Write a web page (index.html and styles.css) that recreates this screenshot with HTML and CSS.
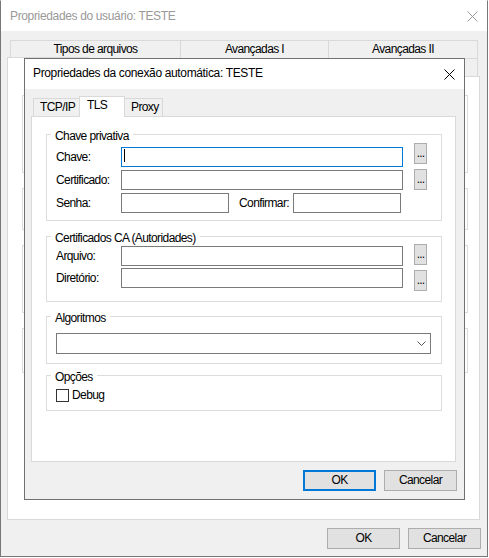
FILE: index.html
```html
<!DOCTYPE html>
<html lang="pt-BR">
<head>
<meta charset="utf-8">
<title>Propriedades da conexão automática</title>
<link rel="stylesheet" href="styles.css">
</head>
<body>
<div class="win">
  <div class="titlebar">
    <span class="title title-inactive">Propriedades do usuário: TESTE</span>
    <svg class="xicon xicon-inactive" width="11" height="11" viewBox="0 0 11 11"><path d="M0.5 0.5L10.5 10.5M10.5 0.5L0.5 10.5"/></svg>
  </div>
  <div class="wbody">
    <div class="otabs otabs-row1">
      <div class="otab otab-a">Tipos de arquivos</div>
      <div class="otab otab-b">Avançadas I</div>
      <div class="otab otab-c">Avançadas II</div>
    </div>
    <div class="otabs otabs-row2">
      <div class="otab otab-sel"></div>
      <div class="otab otab-d"></div>
      <div class="otab otab-e"></div>
    </div>
    <div class="opanel">
      <div class="ogb ogb-1"></div>
      <div class="ogb ogb-2"></div>
      <div class="ogb ogb-3"></div>
      <div class="ogb ogb-4"></div>
    </div>
    <div class="btnrow btnrow-outer">
      <div class="btn">OK</div>
      <div class="btn">Cancelar</div>
    </div>
  </div>

  <div class="dlg">
    <div class="titlebar titlebar-dlg">
      <span class="title">Propriedades da conexão automática: TESTE</span>
      <svg class="xicon" width="11" height="11" viewBox="0 0 11 11"><path d="M0.5 0.5L10.5 10.5M10.5 0.5L0.5 10.5"/></svg>
    </div>
    <div class="dbody">
      <div class="itabs">
        <div class="itab itab-tcp">TCP/IP</div>
        <div class="itab itab-sel">TLS</div>
        <div class="itab itab-proxy">Proxy</div>
      </div>
      <div class="ipanel">
        <fieldset class="gb">
          <legend>Chave privativa</legend>
          <div class="gbb gbb-1">
            <div class="row">
              <span class="lbl lbl-main mt4">Chave:</span>
              <div class="edit edit-long edit-focus mt4"><span class="caret"></span></div>
              <div class="dots">...</div>
            </div>
            <div class="row mt2">
              <span class="lbl lbl-main mt1">Certificado:</span>
              <div class="edit edit-long mt1"></div>
              <div class="dots">...</div>
            </div>
            <div class="row mt3">
              <span class="lbl lbl-main">Senha:</span>
              <div class="edit edit-short"></div>
              <span class="lbl lbl-conf">Confirmar:</span>
              <div class="edit edit-short"></div>
            </div>
          </div>
        </fieldset>

        <fieldset class="gb mt7">
          <legend>Certificados CA (Autoridades)</legend>
          <div class="gbb gbb-2">
            <div class="row mtn1">
              <span class="lbl lbl-main mt2">Arquivo:</span>
              <div class="edit edit-long mt2"></div>
              <div class="dots">...</div>
            </div>
            <div class="row mt2">
              <span class="lbl lbl-main">Diretório:</span>
              <div class="edit edit-long"></div>
              <div class="dots mt2">...</div>
            </div>
          </div>
        </fieldset>

        <fieldset class="gb mt6">
          <legend>Algoritmos</legend>
          <div class="gbb gbb-3">
            <div class="combo">
              <svg class="chev" width="9" height="5" viewBox="0 0 9 5"><path d="M0.5 0.5L4.5 4.5L8.5 0.5"/></svg>
            </div>
          </div>
        </fieldset>

        <fieldset class="gb mt3">
          <legend>Opções</legend>
          <div class="gbb gbb-4">
            <div class="chkrow">
              <span class="chk"></span>
              <span class="chk-lbl">Debug</span>
            </div>
          </div>
        </fieldset>
      </div>
      <div class="btnrow btnrow-dlg">
        <div class="btn btn-default">OK</div>
        <div class="btn">Cancelar</div>
      </div>
    </div>
  </div>
</div>
</body>
</html>
```

FILE: styles.css
```css
* { box-sizing: border-box; }

body {
  margin: 0;
  background: #fff;
  font-family: "Liberation Sans", Arial, sans-serif;
  font-size: 12px;
  letter-spacing: -0.6px;
  color: #000;
}

/* ---------- outer window ---------- */
.win {
  position: relative;
  width: 488px;
  height: 557px;
  border: 1px solid #777;
  border-top-color: #fff;
  background: #f0f0f0;
  display: flex;
  flex-direction: column;
}

.titlebar {
  flex: none;
  height: 30px;
  background: #fff;
  display: flex;
  align-items: center;
  justify-content: space-between;
  padding: 0 9px;
}

.title {
  letter-spacing: -0.35px;
  line-height: 30px;
  white-space: nowrap;
}
.title-inactive { color: #999; }

.xicon {
  flex: none;
  display: block;
  fill: none;
  stroke: #000;
  stroke-width: 1;
}
.xicon-inactive { stroke: #999; }

.wbody {
  flex: 1;
  display: flex;
  flex-direction: column;
  padding-top: 9px;
}

.otabs {
  flex: none;
  display: flex;
  height: 18px;
}
.otabs-row1 { margin-left: 9px; }
.otabs-row2 { margin-left: 6px; }

.otab {
  height: 18px;
  border: 1px solid #d9d9d9;
  border-bottom: none;
  background: #f0f0f0;
  text-align: center;
  line-height: 17px;
  white-space: nowrap;
}
.otab + .otab { margin-left: -1px; }
.otab-a { width: 171px; }
.otab-b { width: 149px; }
.otab-c { width: 150px; }
.otab-d { width: 196px; }
.otab-e { width: 195px; }
.otab-sel {
  width: 82px;
  height: 20px;
  margin-top: -1px;
  background: #fff;
  position: relative;
  z-index: 1;
}

.opanel {
  flex: none;
  margin-left: 6px;
  width: 473px;
  height: 444px;
  border: 1px solid #d9d9d9;
  background: #fff;
  padding-top: 18px;
}

.ogb {
  margin-left: 14px;
  width: 446px;
  border: 1px solid #dcdcdc;
}
.ogb + .ogb { margin-top: 15px; }
.ogb-1 { height: 78px; }
.ogb-2 { height: 42px; }
.ogb-3 { height: 68px; }
.ogb-4 { height: 45px; }

/* ---------- buttons ---------- */
.btnrow {
  flex: none;
  display: flex;
  justify-content: flex-end;
  gap: 8px;
  margin-top: 8px;
}
.btnrow-outer { padding-right: 6px; }

.btn {
  width: 73px;
  height: 21px;
  border: 1px solid #adadad;
  background: #e1e1e1;
  display: flex;
  align-items: center;
  justify-content: center;
  line-height: 17px;
  white-space: nowrap;
}
.btn-default { border: 2px solid #0078d7; }

/* ---------- inner dialog ---------- */
.dlg {
  position: absolute;
  left: 23px;
  top: 57px;
  width: 441px;
  height: 442px;
  border: 1px solid #707070;
  background: #f0f0f0;
  display: flex;
  flex-direction: column;
  z-index: 2;
}

.titlebar-dlg { padding: 0 9px 0 8px; }
.titlebar-dlg .title {
  line-height: 28px;
  align-self: flex-start;
}

.dbody {
  flex: 1;
  display: flex;
  flex-direction: column;
  padding: 7px 7px 8px 6px;
}

.itabs {
  flex: none;
  display: flex;
  align-items: flex-end;
  height: 20px;
}

.itab {
  height: 18px;
  border: 1px solid #d9d9d9;
  border-bottom: none;
  background: #f0f0f0;
  padding-left: 6px;
  line-height: 17px;
  white-space: nowrap;
}
.itab-tcp { margin-left: 2px; width: 48px; }
.itab-sel {
  width: 46px;
  height: 21px;
  margin-left: -2px;
  margin-bottom: -1px;
  padding-left: 7px;
  background: #fff;
  position: relative;
  z-index: 1;
}
.itab-proxy { width: 39px; margin-left: -1px; }

.ipanel {
  flex: none;
  height: 346px;
  margin-right: 1px;
  border: 1px solid #d9d9d9;
  background: #fff;
  padding-top: 9px;
}

/* group boxes */
.gb {
  margin: 0 13px 0 14px;
  padding: 0;
  min-width: 0;
  border: 1px solid #dcdcdc;
}
.gb legend {
  margin-left: 4px;
  padding: 3px 4px 0;
  line-height: 14px;
  white-space: nowrap;
}
.gbb { padding-left: 9px; }
.gbb-1 { padding-bottom: 7px; }
.gbb-2 { padding-bottom: 10px; }
.gbb-3 { padding-top: 8px; padding-bottom: 9px; }
.gbb-4 { padding-top: 5px; padding-bottom: 8px; }

.row {
  display: flex;
  align-items: flex-start;
}

.mt1 { margin-top: 1px; }
.mt2 { margin-top: 2px; }
.mt3 { margin-top: 3px; }
.mt4 { margin-top: 4px; }
.mt6 { margin-top: 6px; }
.mt7 { margin-top: 7px; }
.mtn1 { margin-top: -1px; }

.lbl {
  flex: none;
  height: 20px;
  line-height: 20px;
  white-space: nowrap;
}
.lbl-main { width: 65px; }
.lbl-conf { width: 54px; margin-left: 10px; }

.edit {
  flex: none;
  height: 20px;
  border: 1px solid #7a7a7a;
  background: #fff;
}
.edit-long { width: 282px; }
.edit-short { width: 108px; }
.edit-focus {
  border-color: #0078d7;
  padding: 1px 0 0 2px;
}
.caret {
  display: block;
  width: 1px;
  height: 13px;
  background: #000;
}

.dots {
  flex: none;
  width: 13px;
  height: 21px;
  margin-left: 11px;
  border: 1px solid #adadad;
  background: #e1e1e1;
  text-align: center;
  line-height: 18px;
  letter-spacing: -0.8px;
}

.combo {
  width: 375px;
  height: 21px;
  border: 1px solid #7a7a7a;
  background: #fff;
  display: flex;
  align-items: center;
  justify-content: flex-end;
  padding-right: 4px;
}
.chev {
  display: block;
  fill: none;
  stroke: #555;
  stroke-width: 1;
}

.chkrow {
  display: flex;
  align-items: flex-start;
}
.chk {
  flex: none;
  width: 13px;
  height: 13px;
  border: 1px solid #333;
  background: #fff;
}
.chk-lbl {
  margin-left: 3px;
  line-height: 13px;
}

.btnrow-dlg { margin-top: 8px; }
```
